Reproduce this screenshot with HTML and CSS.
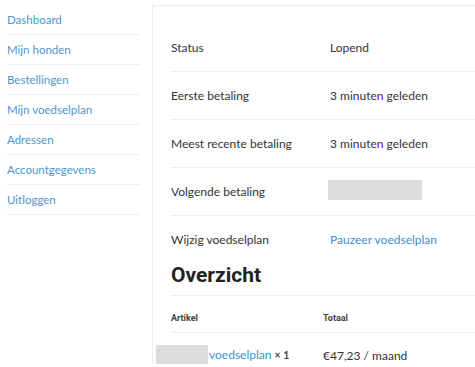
FILE: index.html
```html
<!DOCTYPE html>
<html lang="nl">
<head>
    <meta charset="UTF-8">
    <meta name="viewport" content="width=device-width, initial-scale=1.0">
    <title>Mijn account</title>
    <link rel="stylesheet" href="styles.css">
</head>
<body>
    <div class="account">
        <!-- navigatie -->
        <nav class="account-nav">
            <a href="#">Dashboard</a>
            <a href="#">Mijn honden</a>
            <a href="#">Bestellingen</a>
            <a href="#">Mijn voedselplan</a>
            <a href="#">Adressen</a>
            <a href="#">Accountgegevens</a>
            <a href="#">Uitloggen</a>
        </nav>

        <div class="account-content">
            <div class="info-row">
                <span class="label">Status</span>
                <span>Lopend</span>
            </div>
            <div class="info-row">
                <span class="label">Eerste betaling</span>
                <span>3 minuten geleden</span>
            </div>
            <div class="info-row">
                <span class="label">Meest recente betaling</span>
                <span>3 minuten geleden</span>
            </div>
            <div class="info-row">
                <span class="label">Volgende betaling</span>
                <span class="redacted date-redacted"></span>
            </div>
            <div class="info-row last">
                <span class="label">Wijzig voedselplan</span>
                <a href="#">Pauzeer voedselplan</a>
            </div>

            <h2>Overzicht</h2>

            <table class="order-table">
                <thead>
                    <tr>
                        <th>Artikel</th>
                        <th>Totaal</th>
                    </tr>
                </thead>
                <tbody>
                    <tr>
                        <td><span class="redacted name-redacted"></span><a href="#">voedselplan</a> <strong>× 1</strong></td>
                        <td>€47,23 / maand</td>
                    </tr>
                </tbody>
            </table>
        </div>
    </div>
</body>
</html>
```

FILE: styles.css
```css
body {
    font-family: Lato, "Open Sans", sans-serif;
    font-size: 12px;
    color: #333;
    margin: 0;
    background-color: #fff;
    overflow: hidden;
}
a {
    color: #3b8fd2;
    text-decoration: none;
}
.account {
    display: flex;
    align-items: flex-start;
    padding-top: 5px;
}
.account-nav {
    display: flex;
    flex-direction: column;
    flex-shrink: 0;
    width: 133px;
    margin-left: 7px;
    margin-right: 12px;
}
.account-nav a {
    color: #4f95cf;
    font-size: 11.5px;
    line-height: 17px;
    padding: 6px 0;
    border-bottom: 1px solid #eceef2;
}
.account-content {
    flex: 1;
    min-width: 0;
    border-left: 1px solid #eaecf4;
    border-top: 1px solid #eaecf4;
    padding: 18px 0 0 18px;
}
.info-row {
    display: grid;
    grid-template-columns: 159px 1fr;
    align-items: center;
    height: 17px;
    line-height: 17px;
    padding: 15px 0;
    border-bottom: 1px solid #eceef2;
}
.info-row.last {
    border-bottom: none;
}
.redacted {
    display: inline-block;
    background-color: #dcdcdc;
}
.date-redacted {
    width: 94px;
    height: 20px;
    margin: -3px 0 0 -2px;
}
h2 {
    font-family: Roboto, sans-serif;
    font-size: 21px;
    font-weight: 700;
    color: #222;
    line-height: 25px;
    margin: 0;
    padding-bottom: 7px;
    border-bottom: 1px solid #eceef2;
}
.order-table {
    width: 100%;
    border-collapse: collapse;
}
.order-table th {
    font-family: Roboto, sans-serif;
    font-size: 9px;
    font-weight: 700;
    color: #444;
    text-align: left;
    line-height: 14px;
    padding: 15px 0 7px;
    border-bottom: 1px solid #eceef2;
}
.order-table th:first-child,
.order-table td:first-child {
    width: 152px;
}
.order-table td {
    line-height: 17px;
    padding: 13px 0 0;
    white-space: nowrap;
}
.order-table td strong {
    font-size: 10.5px;
    color: #444;
}
.name-redacted {
    width: 52px;
    height: 21px;
    margin: -2px 1px -2px -15px;
    vertical-align: middle;
}
```
